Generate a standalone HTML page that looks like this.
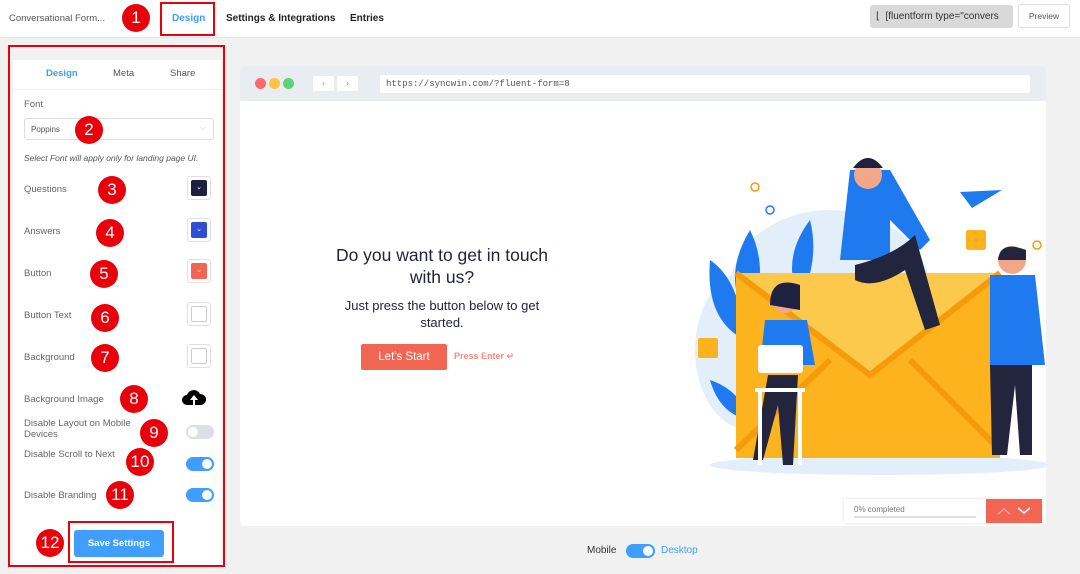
<!DOCTYPE html>
<html><head><meta charset="utf-8"><style>
*{box-sizing:border-box;margin:0;padding:0}
body{width:1080px;height:574px;background:#f1f1f1;font-family:"Liberation Sans",sans-serif;position:relative;overflow:hidden;color:#444}
.a{position:absolute}
.top{left:0;top:0;width:1080px;height:38px;background:#fff;border-bottom:1px solid #e5e5e5}
.nb{font-size:10px;font-weight:bold;color:#222}
.badge{position:absolute;width:28px;height:28px;border-radius:50%;background:#e8000b;color:#fff;font-size:17px;text-align:center;line-height:28px}
.lbl{position:absolute;left:24px;font-size:9.5px;color:#666}
.sw{position:absolute;left:187px;width:24px;height:24px;border:1px solid #e0e0e0;border-radius:3px;padding:3px}
.sw div{width:100%;height:100%;border-radius:2px;color:#fff;font-size:7px;text-align:center;line-height:16px}
.tg{position:absolute;left:186px;width:28px;height:14px;border-radius:7px;background:#409eff}
.tg::after{content:"";position:absolute;right:2px;top:2px;width:10px;height:10px;border-radius:50%;background:#fff}
.tg.off{background:#dcdfe6}.tg.off::after{left:2px;right:auto}
.pop{font-family:"Liberation Sans",sans-serif}
</style></head><body>
<div class="a top"></div>
<div class="a" style="left:9px;top:13px;font-size:9.5px;color:#555">Conversational Form...</div>
<div class="badge" style="left:122px;top:4px">1</div>
<div class="a" style="left:160px;top:2px;width:55px;height:34px;border:2px solid #e8000b"></div>
<div class="a nb" style="left:172px;top:13px;color:#409eff">Design</div>
<div class="a nb" style="left:226px;top:13px">Settings &amp; Integrations</div>
<div class="a nb" style="left:350px;top:13px">Entries</div>
<div class="a" style="left:870px;top:5px;width:143px;height:23px;background:#d9d9d9;border-radius:3px;font-size:10px;color:#333;padding:6px 0 0 6px;white-space:nowrap;overflow:hidden">⌊&nbsp; [fluentform type="convers</div>
<div class="a" style="left:1018px;top:4px;width:52px;height:24px;background:#fff;border:1px solid #ddd;border-radius:3px;font-size:8.5px;text-align:center;line-height:22px;color:#555">Preview</div>

<div class="a" style="left:13px;top:60px;width:208px;height:506px;background:#fff"></div>
<div class="a" style="left:8px;top:45px;width:217px;height:522px;border:2px solid #e8000b"></div>
<div class="a" style="left:13px;top:89px;width:208px;height:1px;background:#eee"></div>
<div class="a" style="left:46px;top:68px;font-size:9.5px;font-weight:bold;color:#409eff">Design</div>
<div class="a" style="left:113px;top:68px;font-size:9.5px;color:#555">Meta</div>
<div class="a" style="left:170px;top:68px;font-size:9.5px;color:#555">Share</div>
<div class="lbl" style="top:99px">Font</div>
<div class="a" style="left:24px;top:118px;width:190px;height:22px;border:1px solid #ddd;border-radius:3px;font-size:8px;color:#555;padding:6px 0 0 6px">Poppins<span style="position:absolute;right:7px;top:4px;color:#bbb">⌵</span></div>
<div class="badge" style="left:75px;top:116px">2</div>
<div class="a" style="left:24px;top:153px;font-size:8.5px;font-style:italic;color:#555">Select Font will apply only for landing page UI.</div>
<div class="lbl" style="top:184px">Questions</div><div class="badge" style="left:98px;top:176px">3</div>
<div class="sw" style="top:176px"><div style="background:#1c1f3f">⌄</div></div>
<div class="lbl" style="top:226px">Answers</div><div class="badge" style="left:96px;top:219px">4</div>
<div class="sw" style="top:218px"><div style="background:#2f4ed4">⌄</div></div>
<div class="lbl" style="top:268px">Button</div><div class="badge" style="left:90px;top:260px">5</div>
<div class="sw" style="top:259px"><div style="background:#f26552">⌄</div></div>
<div class="lbl" style="top:310px">Button Text</div><div class="badge" style="left:91px;top:304px">6</div>
<div class="sw" style="top:302px"><div style="border:1px solid #ccc"></div></div>
<div class="lbl" style="top:352px">Background</div><div class="badge" style="left:91px;top:344px">7</div>
<div class="sw" style="top:344px"><div style="border:1px solid #ccc"></div></div>
<div class="lbl" style="top:394px">Background Image</div><div class="badge" style="left:120px;top:385px">8</div>
<svg class="a" style="left:181px;top:389px" width="26" height="18" viewBox="0 0 26 18"><path d="M6 16a5 5 0 0 1 0-10 7 7 0 0 1 13-1 5 5 0 0 1 1 11z" fill="#000"/><path d="M13 6l-4 5h3v5h2v-5h3z" fill="#fff"/></svg>
<div class="lbl" style="top:418px;line-height:11px">Disable Layout on Mobile<br>Devices</div><div class="badge" style="left:140px;top:419px">9</div>
<div class="tg off" style="top:425px"></div>
<div class="lbl" style="top:449px">Disable Scroll to Next</div><div class="badge" style="left:126px;top:448px">10</div>
<div class="tg" style="top:457px"></div>
<div class="lbl" style="top:490px">Disable Branding</div><div class="badge" style="left:106px;top:481px">11</div>
<div class="tg" style="top:488px"></div>
<div class="badge" style="left:36px;top:529px">12</div>
<div class="a" style="left:68px;top:521px;width:106px;height:42px;border:2px solid #e8000b"></div>
<div class="a" style="left:74px;top:530px;width:90px;height:27px;background:#409eff;border-radius:3px;color:#fff;font-size:9.5px;font-weight:bold;text-align:center;line-height:27px">Save Settings</div>

<div class="a" style="left:240px;top:66px;width:806px;height:460px;background:#fff;border-radius:5px;overflow:hidden">
 <div class="a" style="left:0;top:0;width:806px;height:35px;background:#e9edf2"></div>
 <div class="a" style="left:15px;top:12px;width:11px;height:11px;border-radius:50%;background:#fc6a6a"></div>
 <div class="a" style="left:29px;top:12px;width:11px;height:11px;border-radius:50%;background:#fcc244"></div>
 <div class="a" style="left:43px;top:12px;width:11px;height:11px;border-radius:50%;background:#5fd177"></div>
 <div class="a" style="left:73px;top:10px;width:21px;height:15px;background:#fff;border-radius:2px;font-size:9px;color:#999;text-align:center;line-height:15px">‹</div>
 <div class="a" style="left:97px;top:10px;width:21px;height:15px;background:#fff;border-radius:2px;font-size:9px;color:#999;text-align:center;line-height:15px">›</div>
 <div class="a" style="left:140px;top:9px;width:650px;height:18px;background:#fff;border-radius:2px;font-family:'Liberation Mono',monospace;font-size:9px;color:#555;padding:4px 6px">https://syncwin.com/?fluent-form=8</div>
</div>
<div class="a pop" style="left:322px;top:244px;width:240px;text-align:center;font-size:17.5px;color:#23233f;line-height:22px">Do you want to get in touch with us?</div>
<div class="a pop" style="left:326px;top:297px;width:232px;text-align:center;font-size:13px;color:#23233f;line-height:17px">Just press the button below to get started.</div>
<div class="a pop" style="left:361px;top:344px;width:86px;height:26px;background:#f26552;border-radius:2px;color:#fff;font-size:11.5px;text-align:center;line-height:26px">Let's Start</div>
<div class="a pop" style="left:454px;top:351px;font-size:9px;font-weight:bold;color:#f58c80">Press Enter ↵</div>

<svg class="a" style="left:690px;top:150px" width="356" height="330" viewBox="0 0 356 330">
 <ellipse cx="140" cy="140" rx="100" ry="80" fill="#e3eefb"/>
 <ellipse cx="60" cy="200" rx="55" ry="80" fill="#e3eefb"/>
 <ellipse cx="190" cy="315" rx="170" ry="10" fill="#e3eefb"/>
 <path d="M20 110 q30 20 35 80 q-40 -20 -35 -80z M60 80 q20 40 0 90 q-30 -40 0 -90z M120 70 q10 40 -10 80 q-20 -40 10 -80z" fill="#1f7af0"/>
 <path d="M20 230 q30 10 40 40 q-30 -5 -40 -40z" fill="#1f7af0"/>
 <rect x="46" y="123" width="264" height="185" fill="#fcb31e"/>
 <path d="M46 123 L180 225 L310 123z" fill="#fdc94c"/>
 <path d="M46 123 L180 225 L310 123" fill="none" stroke="#f59b0b" stroke-width="6"/>
 <path d="M46 300 L140 210 M310 300 L220 210" stroke="#f59b0b" stroke-width="6"/>
 <path d="M160 20 h40 l40 70 -10 10 -30 -30 v40 h-50z" fill="#1f7af0"/>
 <circle cx="178" cy="25" r="14" fill="#f0a889"/><path d="M163 18 q15 -20 30 0z" fill="#1e2140"/>
 <path d="M165 115 q40 -10 60 -30 l25 90 -15 5 -20 -60 q-30 20 -50 10z" fill="#23253f"/>
 <circle cx="95" cy="150" r="13" fill="#f0a889"/><path d="M80 155 q0 -30 30 -20 v25z" fill="#1e2140"/>
 <path d="M75 170 h42 l8 45 h-55z" fill="#1f7af0"/>
 <rect x="68" y="195" width="45" height="28" rx="3" fill="#fff"/>
 <path d="M78 225 h30 l-5 90 h-10 l-5 -60 -15 55 h-10z" fill="#23253f"/>
 <path d="M65 240 h50 M70 240 v75 M110 240 v75" stroke="#fff" stroke-width="4"/>
 <circle cx="322" cy="110" r="14" fill="#f0a889"/><path d="M308 110 q2 -20 28 -10 v10z" fill="#23253f"/>
 <path d="M300 125 h45 l10 90 h-55z" fill="#1f7af0"/>
 <path d="M300 215 h42 v90 h-12 l-5 -70 -8 70 h-15z" fill="#23253f"/>
 <rect x="8" y="188" width="20" height="20" rx="2" fill="#fcb31e"/>
 <rect x="276" y="80" width="20" height="20" rx="2" fill="#fcb31e"/>
 <path d="M270 42 l42 -2 -30 18z" fill="#1f7af0"/>
 <circle cx="65" cy="37" r="4" fill="none" stroke="#f59b0b" stroke-width="1.5"/>
 <circle cx="80" cy="60" r="4" fill="none" stroke="#1f7af0" stroke-width="1.5"/>
 <circle cx="347" cy="95" r="4" fill="none" stroke="#f59b0b" stroke-width="1.5"/>
</svg>

<div class="a" style="left:844px;top:499px;width:198px;height:24px;background:#fff;box-shadow:0 0 3px rgba(0,0,0,.15)"></div>
<div class="a pop" style="left:854px;top:505px;font-size:8px;color:#777">0% completed</div>
<div class="a" style="left:854px;top:516px;width:122px;height:2px;background:#ddd"></div>
<div class="a" style="left:986px;top:499px;width:56px;height:24px;background:#f26552"></div>
<svg class="a" style="left:986px;top:499px" width="56" height="24"><path d="M12 15l6-5 6 5" fill="none" stroke="#f9a79c" stroke-width="1.3"/><path d="M32 9l6 5 6-5" fill="none" stroke="#fff" stroke-width="1.5"/></svg>

<div class="a" style="left:587px;top:545px;font-size:10px;color:#333">Mobile</div>
<div class="a" style="left:626px;top:544px;width:29px;height:14px;border-radius:7px;background:#409eff"><div style="position:absolute;right:2px;top:2px;width:10px;height:10px;border-radius:50%;background:#fff"></div></div>
<div class="a" style="left:661px;top:545px;font-size:10px;color:#409eff">Desktop</div>
</body></html>
